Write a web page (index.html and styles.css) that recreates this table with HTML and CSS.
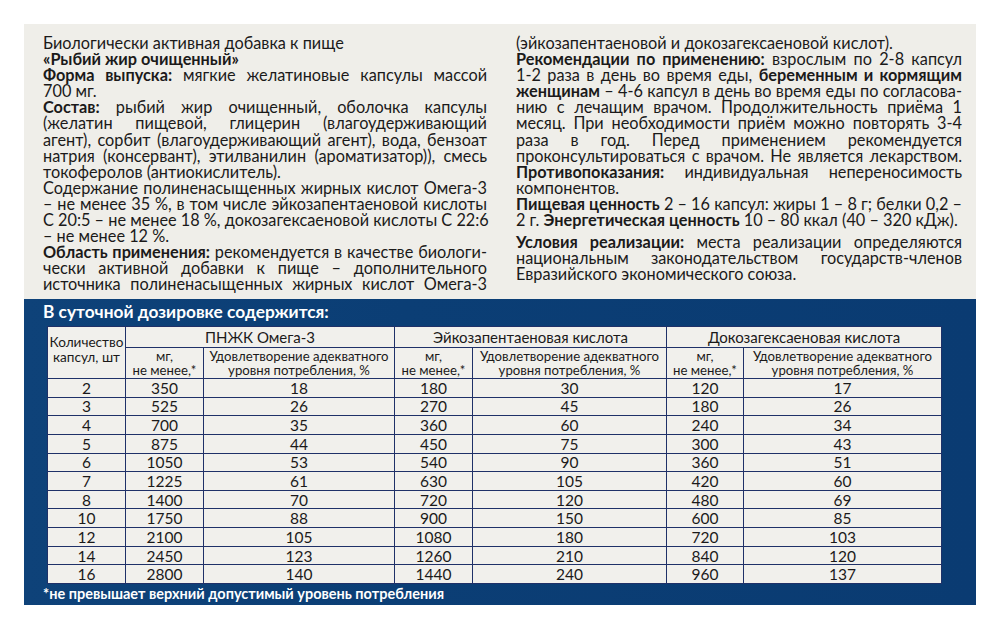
FILE: index.html
```html
<!DOCTYPE html>
<html lang="ru">
<head>
<meta charset="utf-8">
<link rel="stylesheet" href="styles.css">
</head>
<body>
<div class="pack">
  <div class="top">
    <div class="col left">
      <span class="ln">Биологически активная добавка к пище</span>
      <span class="ln"><b>«Рыбий жир очищенный»</b></span>
      <span class="ln j"><b>Форма выпуска:</b> мягкие желатиновые капсулы массой</span>
      <span class="ln">700 мг.</span>
      <span class="ln j"><b>Состав:</b> рыбий жир очищенный, оболочка капсулы</span>
      <span class="ln j">(желатин пищевой, глицерин (влагоудерживающий</span>
      <span class="ln j">агент), сорбит (влагоудерживающий агент), вода, бензоат</span>
      <span class="ln j">натрия (консервант), этилванилин (ароматизатор)), смесь</span>
      <span class="ln">токоферолов (антиокислитель).</span>
      <span class="ln j">Содержание полиненасыщенных жирных кислот Омега-3</span>
      <span class="ln j">– не менее 35 %, в том числе эйкозапентаеновой кислоты</span>
      <span class="ln j">С 20:5 – не менее 18 %, докозагексаеновой кислоты С 22:6</span>
      <span class="ln">– не менее 12 %.</span>
      <span class="ln j"><b>Область применения:</b> рекомендуется в качестве биологи-</span>
      <span class="ln j">чески активной добавки к пище – дополнительного</span>
      <span class="ln j">источника полиненасыщенных жирных кислот Омега-3</span>
    </div>
    <div class="col right">
      <span class="ln">(эйкозапентаеновой и докозагексаеновой кислот).</span>
      <span class="ln j"><b>Рекомендации по применению:</b> взрослым по 2-8 капсул</span>
      <span class="ln j">1-2 раза в день во время еды, <b>беременным и кормящим</b></span>
      <span class="ln j"><b>женщинам</b> – 4-6 капсул в день во время еды по согласова-</span>
      <span class="ln j">нию с лечащим врачом. Продолжительность приёма 1</span>
      <span class="ln j">месяц. При необходимости приём можно повторять 3-4</span>
      <span class="ln j">раза в год. Перед применением рекомендуется</span>
      <span class="ln j">проконсультироваться с врачом. Не является лекарством.</span>
      <span class="ln j"><b>Противопоказания:</b> индивидуальная непереносимость</span>
      <span class="ln">компонентов.</span>
      <span class="ln j"><b>Пищевая ценность</b> 2 – 16 капсул: жиры 1 – 8 г; белки 0,2 –</span>
      <span class="ln">2 г. <b>Энергетическая ценность</b> 10 – 80 ккал (40 – 320 кДж).</span>
      <span class="ln j gap"><b>Условия реализации:</b> места реализации определяются</span>
      <span class="ln j">национальным законодательством государств-членов</span>
      <span class="ln">Евразийского экономического союза.</span>
    </div>
  </div>
  <div class="blue">
    <div class="title">В суточной дозировке содержится:</div>
    <table class="dose">
      <colgroup>
        <col class="c1"><col class="c2"><col class="c3"><col class="c4"><col class="c5"><col class="c6"><col class="c7">
      </colgroup>
      <thead>
        <tr class="h1">
          <th rowspan="2" class="qty">Количество<br>капсул, шт</th>
          <th colspan="2">ПНЖК Омега-3</th>
          <th colspan="2">Эйкозапентаеновая кислота</th>
          <th colspan="2">Докозагексаеновая кислота</th>
        </tr>
        <tr class="h2">
          <th>мг,<br>не менее,*</th>
          <th>Удовлетворение адекватного<br>уровня потребления, %</th>
          <th>мг,<br>не менее,*</th>
          <th>Удовлетворение адекватного<br>уровня потребления, %</th>
          <th>мг,<br>не менее,*</th>
          <th>Удовлетворение адекватного<br>уровня потребления, %</th>
        </tr>
      </thead>
      <tbody>
        <tr><td>2</td><td>350</td><td>18</td><td>180</td><td>30</td><td>120</td><td>17</td></tr>
        <tr><td>3</td><td>525</td><td>26</td><td>270</td><td>45</td><td>180</td><td>26</td></tr>
        <tr><td>4</td><td>700</td><td>35</td><td>360</td><td>60</td><td>240</td><td>34</td></tr>
        <tr><td>5</td><td>875</td><td>44</td><td>450</td><td>75</td><td>300</td><td>43</td></tr>
        <tr><td>6</td><td>1050</td><td>53</td><td>540</td><td>90</td><td>360</td><td>51</td></tr>
        <tr><td>7</td><td>1225</td><td>61</td><td>630</td><td>105</td><td>420</td><td>60</td></tr>
        <tr><td>8</td><td>1400</td><td>70</td><td>720</td><td>120</td><td>480</td><td>69</td></tr>
        <tr><td>10</td><td>1750</td><td>88</td><td>900</td><td>150</td><td>600</td><td>85</td></tr>
        <tr><td>12</td><td>2100</td><td>105</td><td>1080</td><td>180</td><td>720</td><td>103</td></tr>
        <tr><td>14</td><td>2450</td><td>123</td><td>1260</td><td>210</td><td>840</td><td>120</td></tr>
        <tr><td>16</td><td>2800</td><td>140</td><td>1440</td><td>240</td><td>960</td><td>137</td></tr>
      </tbody>
    </table>
    <div class="note">*не превышает верхний допустимый уровень потребления</div>
  </div>
</div>
</body>
</html>
```

FILE: styles.css
```css
html, body {
  margin: 0;
  padding: 0;
  background: #ffffff;
}
body {
  font-family: Lato, "Liberation Sans", sans-serif;
  color: #1b1a1a;
}
.pack {
  margin: 24px 0 0 24px;
  width: 952px;
}
.top {
  background: #efeee9;
  height: 264px;
  padding: 11px 14px 0 19px;
  display: flex;
  gap: 29px;
}
.col.left { width: 444px; }
.col.right { width: 446px; }
.ln {
  display: block;
  font-size: 16.3px;
  line-height: 16.1px;
  text-align: left;
  white-space: nowrap;
}
.ln.j {
  text-align: justify;
  text-align-last: justify;
}
.ln.gap { margin-top: 6px; }
.ln b { font-weight: 700; }

.blue {
  background: linear-gradient(90deg, #0e4279 0%, #0b3e75 40%, #0a3b72 100%);
  height: 306px;
  padding: 0 0 0 19px;
  box-sizing: border-box;
}
.title {
  color: #ffffff;
  font-weight: 700;
  font-size: 17.3px;
  line-height: 20px;
  padding-top: 3px;
  height: 24px;
}
.dose {
  margin-left: 4px;
  border-collapse: collapse;
  table-layout: fixed;
  width: 894px;
  background: #f1f0ec;
}
.c1 { width: 78px; }
.c2 { width: 78px; }
.c3 { width: 191px; }
.c4 { width: 78px; }
.c5 { width: 194px; }
.c6 { width: 77px; }
.c7 { width: 198px; }
.dose th, .dose td {
  border: 1.5px solid #1f3168;
  padding: 0;
  text-align: center;
  font-weight: 400;
  color: #1b1a1a;
  white-space: nowrap;
  overflow: hidden;
}
.h1 th {
  height: 20px;
  font-size: 15px;
  line-height: 16px;
}
.h2 th {
  height: 30px;
  font-size: 13.2px;
  line-height: 14px;
}
.dose th.qty {
  font-size: 13.6px;
  line-height: 15px;
  vertical-align: middle;
  padding-bottom: 6px;
}
.dose tbody tr { height: 18.65px; }
.dose td {
  font-size: 15.5px;
  line-height: 16px;
}
.note {
  color: #ffffff;
  font-weight: 700;
  font-size: 14.5px;
  line-height: 16px;
  padding-top: 2px;
}
```
